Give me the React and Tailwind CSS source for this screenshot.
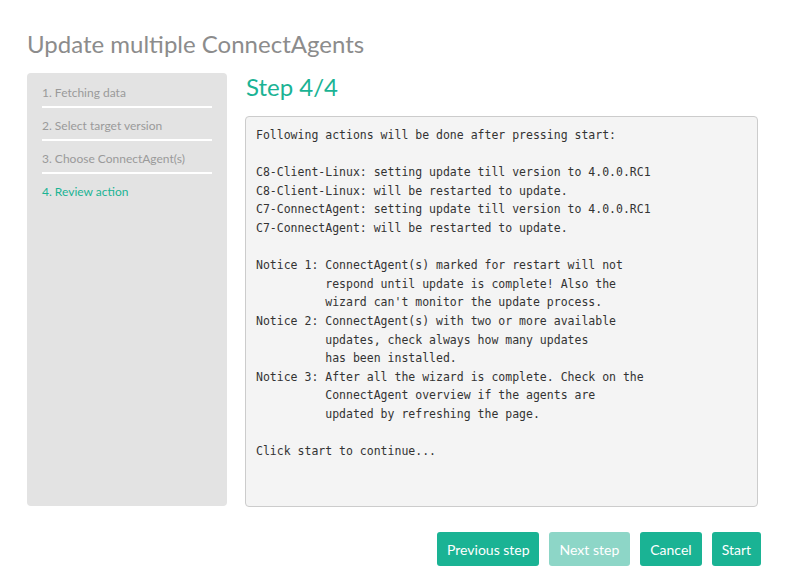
import React from "react";

const lines = [
  "Following actions will be done after pressing start:",
  "",
  "C8-Client-Linux: setting update till version to 4.0.0.RC1",
  "C8-Client-Linux: will be restarted to update.",
  "C7-ConnectAgent: setting update till version to 4.0.0.RC1",
  "C7-ConnectAgent: will be restarted to update.",
  "",
  "Notice 1: ConnectAgent(s) marked for restart will not",
  "          respond until update is complete! Also the",
  "          wizard can't monitor the update process.",
  "Notice 2: ConnectAgent(s) with two or more available",
  "          updates, check always how many updates",
  "          has been installed.",
  "Notice 3: After all the wizard is complete. Check on the",
  "          ConnectAgent overview if the agents are",
  "          updated by refreshing the page.",
  "",
  "Click start to continue...",
];

const steps = [
  "1. Fetching data",
  "2. Select target version",
  "3. Choose ConnectAgent(s)",
  "4. Review action",
];

export default function App() {
  return (
    <div
      className="w-[788px] h-[573px] bg-white pl-[27px] pt-[30px]"
      style={{ fontFamily: "Lato, 'Open Sans', sans-serif" }}
    >
      <h1 className="text-[24px] leading-[28px] text-[#8c8c8c] font-normal">
        Update multiple ConnectAgents
      </h1>
      <div className="flex mt-[15px] gap-[18px]">
        <div className="w-[200px] h-[433px] bg-[#e3e3e3] rounded-[4px] px-[15px] pt-[13px]">
          {steps.map((s, i) => (
            <div
              key={s}
              className={
                i < 3
                  ? "pb-[6px] border-b-2 border-white mb-[11px]"
                  : ""
              }
            >
              <div
                className={
                  "text-[12px] leading-[14px] " +
                  (i === 3 ? "text-[#1ab394]" : "text-[#9a9a9a]")
                }
              >
                {s}
              </div>
            </div>
          ))}
        </div>
        <div className="flex flex-col">
          <h2 className="text-[24px] leading-[28px] text-[#1ab394] font-normal ml-[1px]">
            Step 4/4
          </h2>
          <div className="mt-[15px] w-[513px] h-[391px] bg-[#f4f4f4] border border-[#cccccc] rounded-[4px] pl-[10px] pt-[9px]">
            <pre
              className="text-[11.5px] leading-[18.6px] text-[#333333] whitespace-pre"
              style={{ fontFamily: "'DejaVu Sans Mono', 'Liberation Mono', monospace" }}
            >
              {lines.join("\n")}
            </pre>
          </div>
        </div>
      </div>
      <div className="flex justify-end gap-[10px] mt-[25px] w-[734px]">
        <button className="h-[34px] pl-[10px] pr-[9px] rounded-[3px] bg-[#1ab394] text-white text-[14px]">
          Previous step
        </button>
        <button className="h-[34px] px-[11px] rounded-[3px] bg-[#8dd6c7] text-white text-[14px]">
          Next step
        </button>
        <button className="h-[34px] px-[10px] rounded-[3px] bg-[#1ab394] text-white text-[14px]">
          Cancel
        </button>
        <button className="h-[34px] px-[10px] rounded-[3px] bg-[#1ab394] text-white text-[14px]">
          Start
        </button>
      </div>
    </div>
  );
}
